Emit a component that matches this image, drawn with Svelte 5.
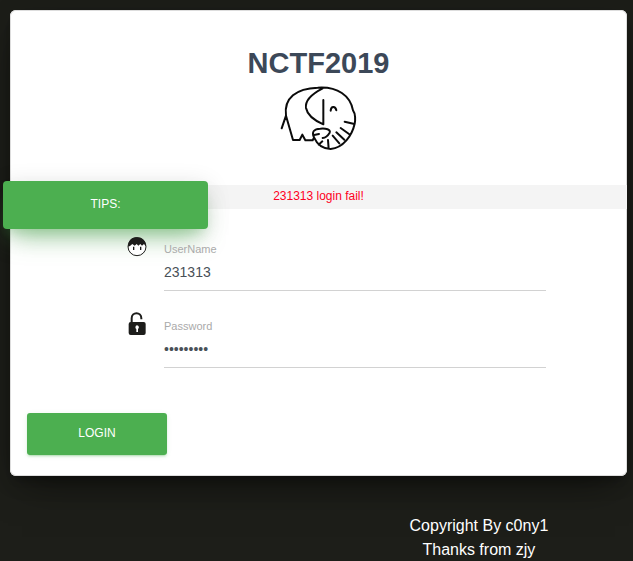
<script>
  let username = $state('231313');
  let password = $state('123456789');
</script>

<main>
  <section class="card">
    <header>
      <h1>NCTF2019</h1>
      <svg class="elephant" viewBox="0 0 285 225" aria-hidden="true">
        <path d="M32 145L45 107L66 180H86L94 164L103 181H125L129 172M45 107C38 54 76 25 140 23C200 19 238 47 246 91C254 101 253 122 251 131C243 167 217 203 179 207C151 206 137 190 129 172C121 155 129 147 148 146C164 144 180 149 176 158C170 168 163 173 155 174M155 25C126 40 101 58 105 84C110 111 141 126 157 133V60M179 92C180 78 193 77 196 91M221 125L247 131M209 144L234 162M196 157L220 179M185 167L205 190M171 180L173 206M154 184L143 194M129 165L144 162" />
      </svg>
    </header>

    <div class="status">
      <div class="tips">TIPS:</div>
      <p role="alert">{username} login fail!</p>
    </div>

    <form onsubmit={(e) => e.preventDefault()}>
      <div class="row">
        <svg class="icon" viewBox="0 0 60 72" aria-hidden="true">
          <circle cx="30" cy="35" r="27" fill="#fff" stroke="#1d1d1b" stroke-width="3" />
          <path d="M3 35C4 14 15 7 30 7S57 15 57 35L51 27L45 32L40 27L34 32L29 27L23 32L16 27L9 33Z" fill="#1d1d1b" />
          <path d="M20 35V45M41 35V45" stroke="#1d1d1b" stroke-width="4" />
        </svg>
        <div class="field">
          <label for="username">UserName</label>
          <input id="username" type="text" bind:value={username} />
        </div>
      </div>
      <div class="row">
        <svg class="icon" viewBox="0 0 60 72" aria-hidden="true">
          <path d="M14 34V19C14 -1 43 -1 43 19V22" fill="none" stroke="#1d1d1b" stroke-width="6" />
          <rect x="5" y="30" width="51" height="39" rx="6" fill="#1d1d1b" />
          <path d="M30 40A6 6 0 0 1 33 51V60H28V51A6 6 0 0 1 30 40Z" fill="#fff" />
        </svg>
        <div class="field">
          <label for="password">Password</label>
          <input id="password" type="password" bind:value={password} />
        </div>
      </div>
      <button type="submit">LOGIN</button>
    </form>
  </section>

  <footer>
    <p>Copyright By c0ny1</p>
    <p>Thanks from zjy</p>
  </footer>
</main>

<style>
  :global(body) {
    background: #1d1e19;
  }

  main {
    box-sizing: border-box;
    padding: 10px 6px 0 10px;
    overflow: hidden;
    font-family: 'Liberation Sans', Arial, sans-serif;
  }

  p,
  h1 {
    margin: 0;
  }

  .card {
    padding: 36px 0 21px;
    border-radius: 6px;
    background: #fff;
    box-shadow:
      inset 0 0 0 1px #ddd,
      0 16px 38px -12px rgba(0, 0, 0, 0.56),
      0 4px 25px 0 rgba(0, 0, 0, 0.12),
      0 8px 10px -5px rgba(0, 0, 0, 0.2);
  }

  header {
    display: flex;
    flex-direction: column;
    align-items: center;
    margin-bottom: 30px;
  }

  h1 {
    color: #3c4858;
    font-size: 29px;
    line-height: 34px;
  }

  .elephant {
    width: 95px;
    height: 75px;
    fill: none;
    stroke: #0b0b0b;
    stroke-width: 6;
    stroke-linecap: round;
    stroke-linejoin: round;
  }

  .status {
    position: relative;
    background: #f4f4f4;
    color: #ff0022;
    font-size: 12px;
    line-height: 22px;
    padding-bottom: 2px;
    text-align: center;
  }

  .tips {
    position: absolute;
    top: -4px;
    left: -7px;
    width: 205px;
    padding-bottom: 2px;
    border-radius: 4px;
    background: #4caf50;
    color: #fff;
    line-height: 46px;
    box-shadow:
      0 16px 26px -10px rgba(76, 175, 80, 0.56),
      0 4px 25px 0 rgba(0, 0, 0, 0.12),
      0 8px 10px -5px rgba(76, 175, 80, 0.2);
  }

  form {
    position: relative;
    padding: 26px 17px 0;
  }

  .row {
    display: flex;
    gap: 17px;
    margin: 0 64px 21px 100px;
  }

  .icon {
    flex: none;
    width: 20px;
    height: 24px;
  }

  .field {
    flex: 1;
    padding-top: 7px;
  }

  label {
    display: block;
    color: #aaa;
    font-size: 11px;
    line-height: 14px;
  }

  input {
    display: block;
    box-sizing: border-box;
    width: 100%;
    height: 35px;
    padding: 0 0 2px;
    border: 0;
    border-bottom: 1px solid #d2d2d2;
    outline: 0;
    background: transparent;
    color: #495057;
    font: 14px 'Liberation Sans', Arial, sans-serif;
  }

  button {
    display: block;
    width: 140px;
    height: 42px;
    margin-top: 45px;
    padding: 0 0 2px;
    border: 0;
    border-radius: 3px;
    background: #4caf50;
    color: #fff;
    font: 12px 'Liberation Sans', Arial, sans-serif;
    box-shadow:
      0 2px 2px 0 rgba(76, 175, 80, 0.14),
      0 3px 1px -2px rgba(76, 175, 80, 0.2),
      0 1px 5px 0 rgba(76, 175, 80, 0.12);
  }

  footer {
    margin: 38px 0 0 52%;
    color: #fff;
    font-size: 16px;
    line-height: 24px;
    text-align: center;
  }
</style>
